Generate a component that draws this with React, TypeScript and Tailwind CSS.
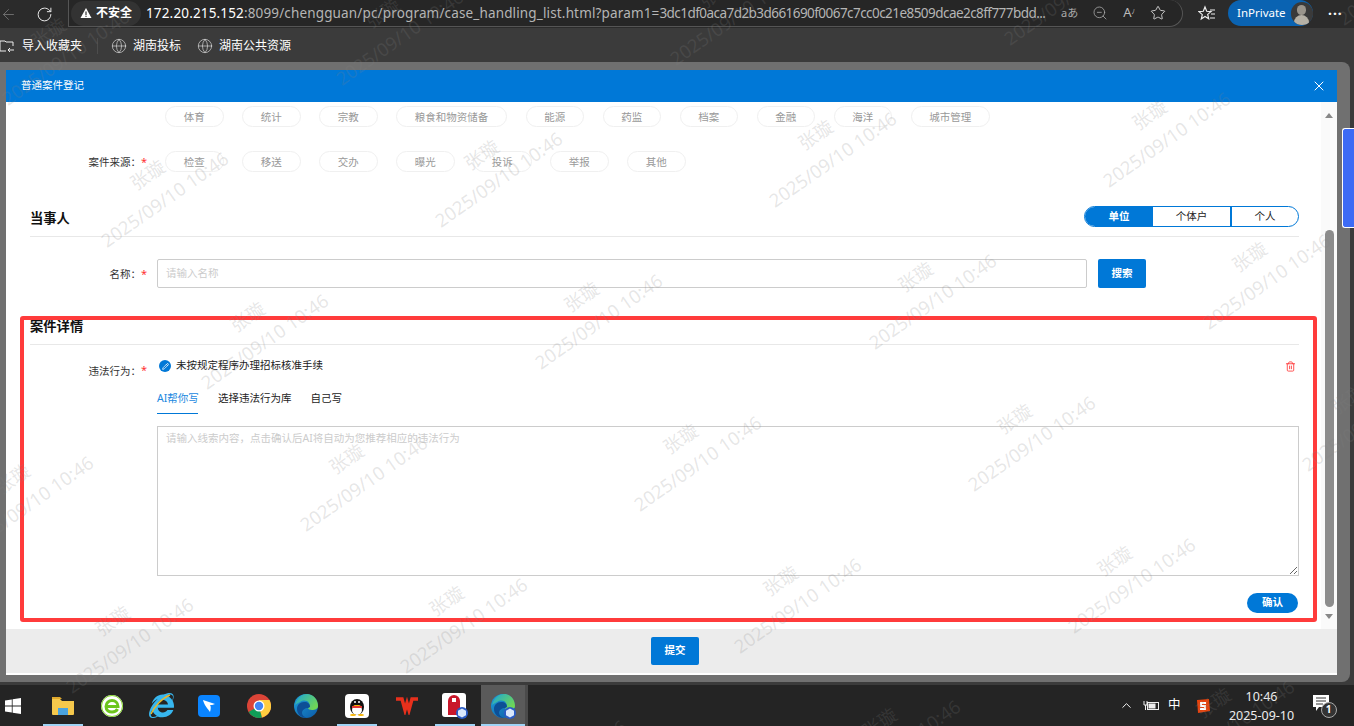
import React from "react";
import { ArrowLeft, RotateCw, Star, ZoomOut, Trash2, ChevronUp, X, Globe, Pencil } from "lucide-react";
import { FaInternetExplorer } from "react-icons/fa";

const Req = () => <div className="w-[16px] text-[11px] leading-[16px] text-[#f33]">*</div>;

const Pill = ({ t }: { t: string }) => (
  <div className="h-[21px] px-[17.75px] rounded-full border border-[#f0f0f0] text-[10.5px] leading-[20px] text-[#999] whitespace-nowrap">{t}</div>
);

const Label = ({ t }: { t: string }) => (
  <div className="w-[111px] text-right text-[10.5px] leading-[16px] text-[#333]">{t}</div>
);

const Edge = ({ badge }: { badge?: boolean }) => (
  <svg width="26" height="26" viewBox="0 0 26 26">
    <defs>
      <linearGradient id="eg" x1="0" y1="0" x2="1" y2="1">
        <stop offset="0" stopColor="#1f9fd8" />
        <stop offset="1" stopColor="#0c5aa8" />
      </linearGradient>
      <linearGradient id="eg2" x1="0" y1="0" x2="1" y2="0.6">
        <stop offset="0" stopColor="#1ba6d8" />
        <stop offset="1" stopColor="#70d655" />
      </linearGradient>
    </defs>
    <circle cx="13" cy="13" r="12" fill="url(#eg)" />
    <path d="M2 12C4 4 10 1 14 1c6 0 11 5 11 12 0 3-3 4-6 4-2 0-4-1-4-2 2-1 2-3 1-5-2-3-6-3-9-1-2 1-4 2-5 3z" fill="url(#eg2)" />
    <path d="M15 15c-3 0-6 2-6 5 0 2 2 4 5 5-6 0-10-4-10-9 0-4 3-7 7-7s6 2 6 5z" fill="#0d4f96" />
    {badge && <Badge />}
  </svg>
);

const Badge = () => (
  <g>
    <circle cx="20" cy="20" r="6" fill="#2a5bc4" />
    <path d="M20 15.5l4 2.2v4.6l-4 2.2-4-2.2v-4.6z" fill="#d9e7fb" />
  </g>
);

const Tray = ({ className, children }: { className: string; children: React.ReactNode }) => (
  <div className={`flex items-center justify-center h-full relative ${className}`}>{children}</div>
);

const Under = ({ w }: { w: string }) => <div className={`absolute bottom-0 left-0 h-[2px] bg-[#9fd3f5] ${w}`} />;

const marks: { x: number; y: number }[] = [];
for (let i = -1; i < 5; i++) {
  for (let j = -2; j < 5; j++) {
    marks.push({ x: 156 + 334 * i + 99.5 * j, y: 187 - 20 * i + 142 * j });
  }
}

export default function App() {
  return (
    <div className="relative flex flex-col w-[1354px] h-[726px] overflow-hidden bg-[#3b3b3b] font-['Noto_Sans','Noto_Sans_CJK_SC',sans-serif]">
      {/* address bar */}
      <div className="flex items-center h-[28px] shrink-0 bg-[#2b2b2b]">
        <ArrowLeft size={17} strokeWidth={1.2} className="text-[#777]" />
        <RotateCw size={17} strokeWidth={1.4} className="ml-[19px] text-[#e8e8e8]" />
        <div className="ml-[15px] flex items-center w-[1115px] h-[27px] -mt-[1px] rounded-r-full rounded-l-[14px] bg-[#262626] border border-[#555] border-t-0">
          <div className="flex items-center ml-[2px] h-[25px] w-[70px] rounded-full bg-[#333] pl-[9px]">
            <svg width="12" height="12" viewBox="0 0 12 12"><path d="M6 1l5.5 10H.5z" fill="#fff" /><rect x="5.4" y="4.5" width="1.2" height="3.5" fill="#333" /><rect x="5.4" y="8.7" width="1.2" height="1.2" fill="#333" /></svg>
            <span className="ml-[4px] text-[12px] font-bold text-white">不安全</span>
          </div>
          <div className="ml-[5px] w-[900px] whitespace-nowrap overflow-hidden text-[13.5px] leading-[26px] text-[#b5b5b5]">
            <span className="text-white tracking-[0.15px]">172.20.215.152</span>
            <span className="tracking-[0.15px]">:8099/chengguan/pc/program/case_handling_list.html?param1=</span>
            <span className="tracking-[-0.55px]">3dc1df0aca7d2b3d661690f0067c7cc0c21e8509dcae2c8ff777bdd...</span>
          </div>
          <span className="ml-[15px] text-[11px] text-[#aaa]">aあ</span>
          <ZoomOut size={16} strokeWidth={1.2} className="ml-[14px] text-[#aaa]" />
          <span className="ml-[15px] text-[13px] text-[#bbb]">A<sup className="text-[7px]">ﾉ</sup></span>
          <Star size={16} strokeWidth={1.3} className="ml-[15px] text-[#ddd]" />
        </div>
        <svg width="18" height="18" viewBox="0 0 18 18" className="ml-[15px]" fill="none" stroke="#eee" strokeWidth="1.2"><path d="M7 2l1.7 4.3 4.3.3-3.3 2.8 1 4.3L7 11.5 3.3 13.9l1-4.3L1 6.6l4.3-.3z" /><path d="M12 5h5M13 9h4M12 13h5" /></svg>
        <div className="ml-[12px] flex items-center w-[85px] h-[26px] -mt-[2px] rounded-full bg-[#0a63b2] pl-[9px]">
          <span className="text-[11.5px] text-white">InPrivate</span>
          <div className="ml-[5px] w-[23px] h-[23px] rounded-full bg-[#3a3a3a] flex flex-col items-center overflow-hidden pt-[3px]">
            <div className="w-[9px] h-[10px] rounded-full bg-[#9a958c]" />
            <div className="w-[15px] h-[10px] rounded-t-full bg-[#b5b0a5]" />
          </div>
        </div>
        <span className="ml-[15px] text-[14px] font-bold leading-[14px] text-white tracking-[1px]">···</span>
      </div>

      {/* bookmarks */}
      <div className="flex items-center h-[34px] shrink-0 pt-[1px] bg-[#3b3b3b] text-[12px] text-white whitespace-nowrap">
        <svg width="16" height="16" viewBox="0 0 16 16" className="-ml-[1px]" fill="none" stroke="#eee" strokeWidth="1"><path d="M1 3h5l1 1h7v4M1 3v10h6M10 12h5M11 14l-2-2 2-2M13 10v0" /></svg>
        <span className="ml-[7px]">导入收藏夹</span>
        <div className="ml-[15px] w-px h-[16px] bg-[#4d4d4d]" />
        <Globe size={16} strokeWidth={1} className="ml-[13px] text-[#ddd]" />
        <span className="ml-[6px]">湖南投标</span>
        <Globe size={16} strokeWidth={1} className="ml-[16px] text-[#ddd]" />
        <span className="ml-[6px]">湖南公共资源</span>
      </div>

      {/* dimmed page */}
      <div className="relative w-[1350px] h-[620px] shrink-0 bg-[#707070] rounded-tr-[8px] rounded-br-[8px] pt-[8px] pl-[6px]">
        <div className="flex flex-col w-[1331px] h-[605px] bg-white">
          <div className="flex items-center justify-between h-[32px] shrink-0 bg-[#0078d7] pl-[15px] pr-[10px]">
            <span className="text-[10.5px] text-white">普通案件登记</span>
            <X size={16} strokeWidth={1.5} className="text-white" />
          </div>

          <div className="relative flex h-[527px] shrink-0 overflow-hidden">
            <div className="w-[1315px] pl-[24px] pr-[22px] pt-[4px]">
              <div className="flex gap-[18.5px] pl-[135px]">
                {["体育", "统计", "宗教", "粮食和物资储备", "能源", "药监", "档案", "金融", "海洋", "城市管理"].map((t) => (
                  <Pill key={t} t={t} />
                ))}
              </div>

              <div className="flex items-center mt-[24px] h-[21px]">
                <Label t="案件来源：" />
                <Req />
                <div className="flex gap-[18.5px] pl-[8px]">
                  {["检查", "移送", "交办", "曝光", "投诉", "举报", "其他"].map((t) => (
                    <Pill key={t} t={t} />
                  ))}
                </div>
              </div>

              <div className="flex items-start justify-between mt-[34px] h-[31px] border-b border-[#e8e8e8]">
                <span className="text-[13.3px] leading-[24px] font-bold text-[#111]">当事人</span>
                <div className="flex w-[215px] h-[21px] rounded-full border border-[#0078d7] overflow-hidden text-[10.5px] leading-[19px] text-center">
                  <div className="w-[68px] bg-[#0078d7] text-white font-bold">单位</div>
                  <div className="w-[79px] border-r-2 border-[#0078d7] text-[#222]">个体户</div>
                  <div className="flex-1 text-[#222]">个人</div>
                </div>
              </div>

              <div className="flex items-center mt-[22px] h-[29px]">
                <Label t="名称：" />
                <Req />
                <div className="flex items-center w-[930px] h-[29px] rounded-[2px] border border-[#ccc] pl-[8px] text-[10.5px] text-[#ccc]">请输入名称</div>
                <div className="ml-[11px] flex items-center justify-center w-[48px] h-[29px] rounded-[2px] bg-[#0078d7] text-[10.5px] font-bold text-white">搜索</div>
              </div>

              <div className="mt-[28px] h-[29px] border-b border-[#e8e8e8] text-[13.3px] leading-[20px] font-bold text-[#111]">案件详情</div>

              <div className="flex mt-[13px]">
                <div className="pt-[5px]"><Label t="违法行为：" /></div>
                <div className="pt-[4px]"><Req /></div>
                <div className="flex-1">
                  <div className="flex items-center justify-between h-[16px] pr-[3px]">
                    <div className="flex items-center">
                      <div className="ml-[2px] flex items-center justify-center w-[12px] h-[12px] rounded-full bg-[#0078d7]">
                        <Pencil size={7} strokeWidth={2.5} className="text-white" />
                      </div>
                      <span className="ml-[5px] text-[10.5px] text-[#222]">未按规定程序办理招标核准手续</span>
                    </div>
                    <Trash2 size={11} strokeWidth={1.8} className="text-[#f33]" />
                  </div>
                  <div className="flex mt-[16px] h-[24px] text-[10.5px] leading-[16px] text-[#222]">
                    <div className="w-[41px] h-[24px] border-b border-[#0078d7] text-[#2188e0] whitespace-nowrap">AI帮你写</div>
                    <div className="ml-[20px]">选择违法行为库</div>
                    <div className="ml-[19px]">自己写</div>
                  </div>
                  <textarea
                    className="block mt-[12px] w-[1142px] h-[150px] border border-[#ccc] px-[8px] py-[3px] text-[10.5px] leading-[16px] outline-none placeholder:text-[#ccc]"
                    placeholder="请输入线索内容，点击确认后AI将自动为您推荐相应的违法行为"
                  />
                  <div className="flex justify-end mt-[17px] pr-[1px]">
                    <div className="flex items-center justify-center w-[51px] h-[20px] rounded-full bg-[#0078d7] text-[10.5px] font-bold text-white">确认</div>
                  </div>
                </div>
              </div>
            </div>

            <div className="flex flex-col items-center w-[16px] bg-[#fafafa] pt-[11px]">
              <div className="w-0 h-0 border-x-[4px] border-x-transparent border-b-[5px] border-b-[#888]" />
              <div className="mt-[112px] w-[9px] h-[377px] rounded-[5px] bg-[#8c8c8c]" />
              <div className="mt-[7px] w-0 h-0 border-x-[4px] border-x-transparent border-t-[5px] border-t-[#888]" />
            </div>

            {/* annotation */}
            <div className="absolute left-[14px] top-[214px] w-[1297px] h-[306px] rounded-[3px] border-4 border-[#ff3b3b] pointer-events-none" />
          </div>

          <div className="flex justify-center items-start h-[45px] shrink-0 bg-[#ececec] pt-[8px] pl-[7px] border-b border-white">
            <div className="flex items-center justify-center w-[48px] h-[28px] rounded-[2px] bg-[#0078d7] text-[10.5px] font-bold text-white">提交</div>
          </div>
        </div>
      </div>

      <div className="h-[3px] shrink-0 bg-[#3b3b3b]" />

      {/* taskbar */}
      <div className="flex items-center h-[41px] shrink-0 bg-[#242424]">
        <Tray className="w-[26px]">
          <svg width="16" height="16" viewBox="0 0 16 16" fill="#fff"><path d="M0 2.4l6.8-1v6.2H0zM7.6 1.3L16 0v7.6H7.6zM0 8.4h6.8v6.2l-6.8-1zM7.6 8.4H16V16l-8.4-1.3z" /></svg>
        </Tray>
        <Tray className="ml-[17px] w-[40px]">
          <svg width="22" height="20" viewBox="0 0 22 20"><path d="M0 3h8l2 2h12v13a1 1 0 0 1-1 1H1a1 1 0 0 1-1-1z" fill="#f5c84c" /><path d="M0 1h8l2 2H0z" fill="#e0a92d" /><rect x="6" y="12" width="10" height="7" fill="#4aa3df" /></svg>
          <Under w="w-full" />
        </Tray>
        <Tray className="ml-[9px] w-[40px]">
          <svg width="24" height="24" viewBox="0 0 24 24" fill="none"><circle cx="12" cy="12" r="11" fill="#fff" /><circle cx="12" cy="12" r="10.5" stroke="#7ed321" strokeWidth="1" /><path d="M6 12.500h12c0-4-3-6-6-6s-6 2.500-6 6c0 4 3 5.500 6 5.500 2.500 0 4.500-1 5.500-3" stroke="#6cc51d" strokeWidth="3" /></svg>
        </Tray>
        <Tray className="ml-[9px] w-[40px]">
          <div className="relative">
            <FaInternetExplorer size={25} className="text-[#37b6ee]" />
            <svg width="25" height="25" viewBox="0 0 25 25" className="absolute inset-0" fill="none"><path d="M2 21C5 14 13 5 21 2" stroke="#e8b72e" strokeWidth="1.500" /></svg>
          </div>
        </Tray>
        <Tray className="ml-[8px] w-[40px]">
          <div className="flex items-center justify-center w-[22px] h-[22px] rounded-[4px] bg-[#0a84ff]">
            <svg width="14" height="14" viewBox="0 0 14 14" fill="#fff"><path d="M1 1c4 1 8 3 12 4-2 1-4 1-5 1 1 1 1 4 0 7C6 10 2 6 1 1z" /></svg>
          </div>
        </Tray>
        <Tray className="ml-[10px] w-[40px]">
          <svg width="24" height="24" viewBox="0 0 24 24">
            <circle cx="12" cy="12" r="12" fill="#db4437" />
            <path d="M12 12L1.600 18A12 12 0 0 0 15 23.600z" fill="#0f9d58" />
            <path d="M12 6h10.500A12 12 0 0 1 15 23.600L12 12z" fill="#ffcd40" />
            <circle cx="12" cy="12" r="5.500" fill="#fff" />
            <circle cx="12" cy="12" r="4.200" fill="#4285f4" />
          </svg>
        </Tray>
        <Tray className="ml-[7px] w-[40px]"><Edge /></Tray>
        <Tray className="ml-[11px] w-[40px]">
          <div className="flex items-center justify-center w-[24px] h-[24px] rounded-[4px] bg-white">
            <svg width="18" height="20" viewBox="0 0 18 20"><ellipse cx="9" cy="11" rx="7" ry="8" fill="#111" /><ellipse cx="9" cy="14" rx="5" ry="5" fill="#fff" /><circle cx="7" cy="6" r="1" fill="#fff" /><circle cx="11" cy="6" r="1" fill="#fff" /><path d="M5 9h8l-4 2z" fill="#f7b500" /><path d="M4 10h10v2H4z" fill="#e53935" /><ellipse cx="5" cy="19" rx="3" ry="1" fill="#f7b500" /><ellipse cx="13" cy="19" rx="3" ry="1" fill="#f7b500" /></svg>
          </div>
          <Under w="w-full" />
        </Tray>
        <Tray className="ml-[10px] w-[40px]">
          <svg width="24" height="18" viewBox="0 0 24 18" fill="none" stroke="#e8301c" strokeWidth="3.500"><path d="M1 2h6l3 11 2-7 2 7 3-11h6" /></svg>
        </Tray>
        <Tray className="ml-[8px] w-[40px]">
          <svg width="26" height="26" viewBox="0 0 26 26"><rect x="0" y="0" width="24" height="24" rx="3" fill="#fff" /><path d="M6 22V8a6 6 0 0 1 12 0v14z" fill="#c9172b" /><rect x="10" y="5" width="4" height="4" fill="#fff" /><Badge /></svg>
          <Under w="w-full" />
        </Tray>
        <Tray className="ml-[6px] w-[44px] bg-[#5a5a5a]">
          <Edge badge />
          <Under w="w-full" />
        </Tray>
        <div className="w-[3px] h-full bg-[#4a4a4a]" />

        <ChevronUp size={15} strokeWidth={1.5} className="ml-[591px] text-white" />
        <svg width="16" height="11" viewBox="0 0 16 11" className="ml-[9px]" fill="none" stroke="#eee" strokeWidth="1"><rect x="4.500" y="2.500" width="11" height="7" /><rect x="6" y="4" width="6" height="4" fill="#eee" /><path d="M1 1v4h3V1M2.500 5v5" /></svg>
        <span className="ml-[9px] text-[12.5px] text-white">中</span>
        <svg width="16" height="16" viewBox="0 0 16 16" className="ml-[14px]"><path d="M2 2l12-1 1 12-12 2z" fill="#e8420b" /><path d="M11 5H6v3h4v3H5" fill="none" stroke="#fff" strokeWidth="1.800" /></svg>
        <div className="ml-[11px] w-[80px] text-center text-[12.5px] leading-[19px] text-[#eee] whitespace-nowrap">
          <div>10:46</div>
          <div>2025-09-10</div>
        </div>
        <div className="relative ml-[11px] w-[24px] h-[24px]">
          <svg width="17" height="18" viewBox="0 0 17 18" fill="#fff"><path d="M0 1h16v12H6l-3 4v-4H0z" /><path d="M3 4h10M3 7h10M3 10h7" stroke="#333" /></svg>
          <div className="absolute right-0 bottom-0 flex items-center justify-center w-[16px] h-[16px] rounded-full bg-[#333] border border-[#aaa] text-[10px] font-bold text-white">1</div>
        </div>
      </div>

      {/* browser side widget */}
      <div className="absolute right-0 top-[128px] w-[12px] h-[100px] rounded-l-[3px] bg-[#3d6bf5] border border-r-0 border-white" />

      {/* watermarks */}
      <div className="absolute inset-0 overflow-hidden pointer-events-none">
        {marks.map((m, i) => (
          <div
            key={i}
            className="absolute w-[200px] -ml-[100px] -mt-[30px] -rotate-[35deg] text-center text-[18.5px] leading-[30px] text-[rgba(130,130,130,0.2)] whitespace-nowrap"
            style={{ left: m.x, top: m.y }}
          >
            <div>张璇</div>
            <div>2025/09/10 10:46</div>
          </div>
        ))}
      </div>
    </div>
  );
}
